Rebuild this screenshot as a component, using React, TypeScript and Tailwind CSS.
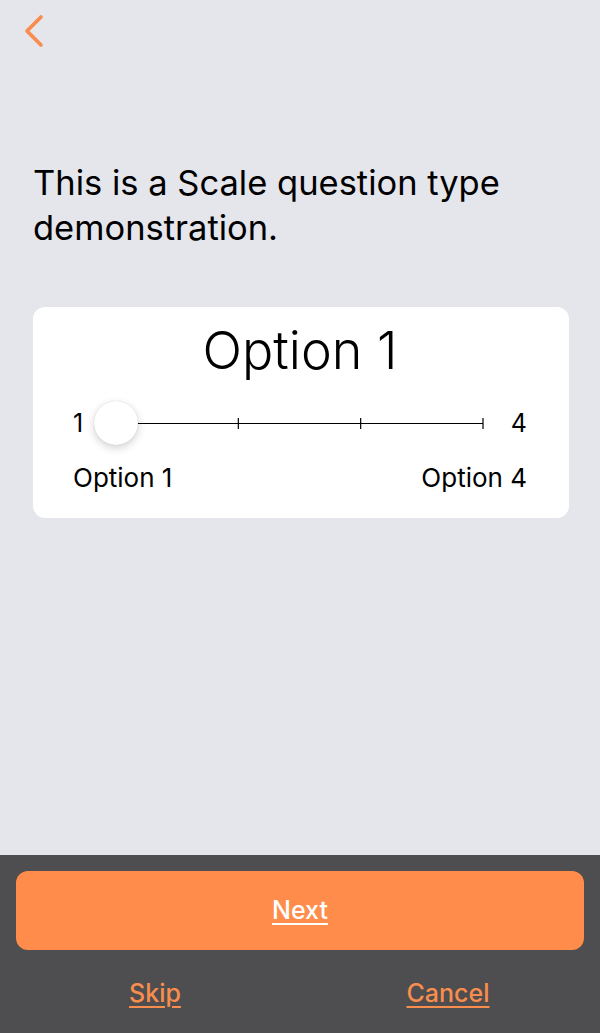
import { ChevronLeft } from "lucide-react";

const ticks = [0, 1, 2, 3];

const ScaleSlider = () => {
  return (
    <div className="flex items-center">
      <span className="w-[14px] text-[25px] leading-none text-black">1</span>
      <div className="relative ml-[7px] h-[46px] w-[411px]">
        {/* track with ticks */}
        <svg className="absolute inset-0" width="411" height="46" viewBox="0 0 411 46">
          <line x1="22" y1="23.5" x2="389" y2="23.5" stroke="#000" strokeWidth="1.2" />
          {ticks.slice(1).map((t) => {
            const x = 22 + (367 / 3) * t;
            return <line key={t} x1={x} y1="18" x2={x} y2="29" stroke="#000" strokeWidth="1.2" />;
          })}
        </svg>
        {/* thumb */}
        <div className="absolute left-0 top-px h-[44px] w-[44px] rounded-full bg-white shadow-[0_3px_8px_rgba(0,0,0,0.18),0_0_1px_rgba(0,0,0,0.2)]" />
      </div>
      <span className="ml-[7px] text-[25px] leading-none text-black">4</span>
    </div>
  );
};

export default function App() {
  return (
    <div className="flex h-[1033px] w-[600px] flex-col bg-[#e5e5ec] font-['Inter',sans-serif]">
      <div className="flex-1">
        <div className="pl-[6px] pt-[3px]">
          <ChevronLeft className="h-[56px] w-[56px] text-[#f98d4d]" strokeWidth={1.6} absoluteStrokeWidth />
        </div>

        <h1 className="mt-[101px] px-[33px] text-[34.5px] leading-[45px] font-normal text-black">
          This is a Scale question type demonstration.
        </h1>

        <div className="ml-[33px] mr-[31px] mt-[57px] rounded-[12px] bg-white pb-[25px] pl-[40px] pr-[42px] pt-[15px]">
          <div className="text-center text-[52px] font-light leading-[58px] text-black">Option 1</div>
          <div className="mt-[20px]">
            <ScaleSlider />
          </div>
          <div className="mt-[17px] flex justify-between text-[26px] leading-[30px] text-black">
            <span>Option 1</span>
            <span>Option 4</span>
          </div>
        </div>
      </div>

      <div className="h-[178px] bg-[#4e4d4f] px-[16px] pt-[16px]">
        <button className="flex h-[79px] w-full items-center justify-center rounded-[12px] bg-[#ff8c4b] text-[25px] font-medium text-white underline underline-offset-4">
          Next
        </button>
        <div className="mt-[25px] flex text-[25px] font-medium text-[#f98d4d]">
          <span className="w-[278px] text-center underline underline-offset-4">Skip</span>
          <span className="flex-1 text-center underline underline-offset-4 pl-[18px]">Cancel</span>
        </div>
      </div>
    </div>
  );
}
